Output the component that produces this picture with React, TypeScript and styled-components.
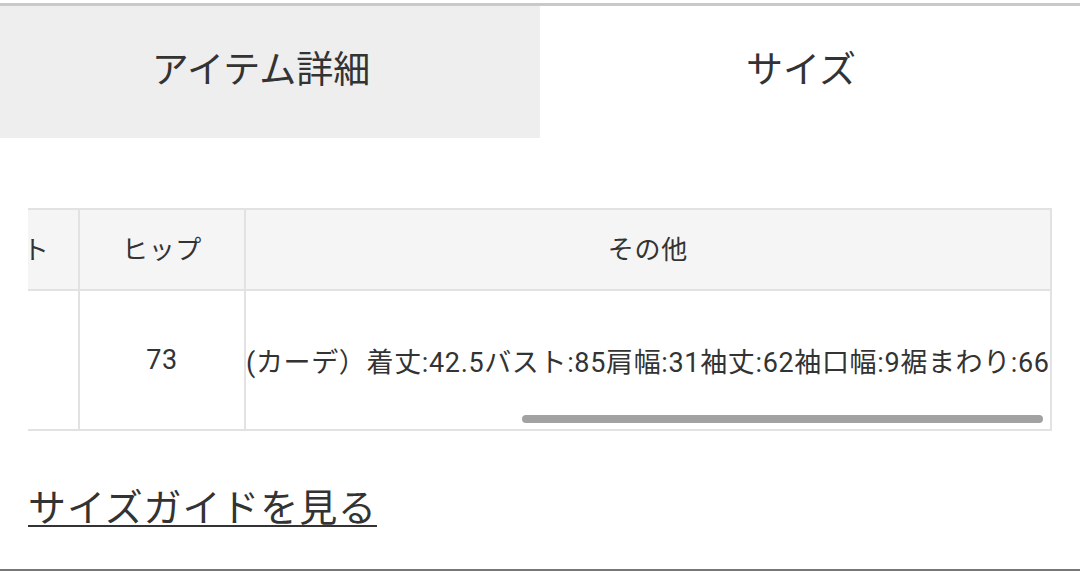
import React, { useLayoutEffect, useRef } from "react";
import styled, { createGlobalStyle } from "styled-components";

const GlobalStyle = createGlobalStyle`
  html, body {
    margin: 0;
    padding: 0;
    background: #ffffff;
  }
  body {
    font-family: Roboto, "Noto Sans CJK JP", "Noto Sans", sans-serif;
    color: #333333;
  }
`;

interface SizeColumn {
  label: string;
  value: string;
  wide?: boolean;
}

const columns: SizeColumn[] = [
  { label: "サイズ", value: "F" },
  { label: "着丈", value: "86" },
  { label: "バスト", value: "84" },
  { label: "肩幅", value: "32" },
  { label: "袖丈", value: "-" },
  { label: "ウエスト", value: "" },
  { label: "ヒップ", value: "73" },
  {
    label: "その他",
    value: "(カーデ）着丈:42.5バスト:85肩幅:31袖丈:62袖口幅:9裾まわり:66",
    wide: true
  }
];

const App: React.FC = () => {
  const scrollRef = useRef<HTMLDivElement>(null);

  useLayoutEffect(() => {
    const el = scrollRef.current;
    if (el) el.scrollLeft = el.scrollWidth;
  }, []);

  return (
    <Page>
      <GlobalStyle />
      <TopRule />

      <TabBar>
        <Tab>アイテム詳細</Tab>
        <Tab active>サイズ</Tab>
      </TabBar>

      <SizeSection>
        <TableFrame>
          <TableScroll ref={scrollRef}>
            <SizeTable>
              <thead>
                <tr>
                  {columns.map(col => (
                    <HeadCell key={col.label}>{col.label}</HeadCell>
                  ))}
                </tr>
              </thead>
              <tbody>
                <tr>
                  {columns.map(col => (
                    <BodyCell key={col.label} wide={col.wide}>
                      {col.value}
                    </BodyCell>
                  ))}
                </tr>
              </tbody>
            </SizeTable>
          </TableScroll>
          <ScrollThumb />
        </TableFrame>
      </SizeSection>

      <GuideLink href="#">サイズガイドを見る</GuideLink>

      <BottomRule />
    </Page>
  );
};

const Page = styled.div`
  display: flex;
  flex-direction: column;
  height: 100vh;
  box-sizing: border-box;
  padding-top: 3px;
  overflow: hidden;
`;

const TopRule = styled.div`
  height: 3px;
  background: #c9c9c9;
  flex-shrink: 0;
`;

const TabBar = styled.div`
  display: grid;
  grid-template-columns: 540px 1fr;
  height: 132px;
  flex-shrink: 0;
`;

const Tab = styled.div<{ active?: boolean }>`
  display: flex;
  align-items: center;
  justify-content: center;
  background: ${p => (p.active ? "#ffffff" : "#eeeeee")};
  color: #333333;
  font-size: 37px;
  padding: 0 18px 10px 0;
`;

const SizeSection = styled.div`
  padding: 70px 28px 0;
  flex-shrink: 0;
`;

const TableFrame = styled.div`
  position: relative;
`;

const TableScroll = styled.div`
  overflow-x: auto;
  scrollbar-width: none;
  &::-webkit-scrollbar {
    display: none;
  }
`;

const SizeTable = styled.table`
  border-collapse: collapse;
  font-size: 27px;
  letter-spacing: 0.65px;
  color: #333333;
`;

const HeadCell = styled.th`
  border: 2px solid #e2e2e2;
  background: #f5f5f5;
  font-weight: 400;
  font-size: 26px;
  height: 74px;
  min-width: 164px;
  padding: 0 0 5px;
  text-align: center;
  white-space: nowrap;
`;

const BodyCell = styled.td<{ wide?: boolean }>`
  border: 2px solid #e2e2e2;
  background: #ffffff;
  height: 138px;
  padding: 0;
  text-align: ${p => (p.wide ? "left" : "center")};
  white-space: nowrap;
`;

const ScrollThumb = styled.div`
  position: absolute;
  left: 494px;
  top: 207px;
  width: 521px;
  height: 8px;
  border-radius: 4px;
  background: #a2a2a2;
`;

const GuideLink = styled.a`
  align-self: flex-start;
  margin: 53px 0 0 28px;
  font-size: 38px;
  letter-spacing: 0.9px;
  line-height: 49px;
  color: #333333;
  text-decoration: underline;
  text-decoration-thickness: 2px;
  text-underline-offset: 4px;
`;

const BottomRule = styled.div`
  margin-top: auto;
  height: 2px;
  background: #777777;
  flex-shrink: 0;
`;

export default App;
